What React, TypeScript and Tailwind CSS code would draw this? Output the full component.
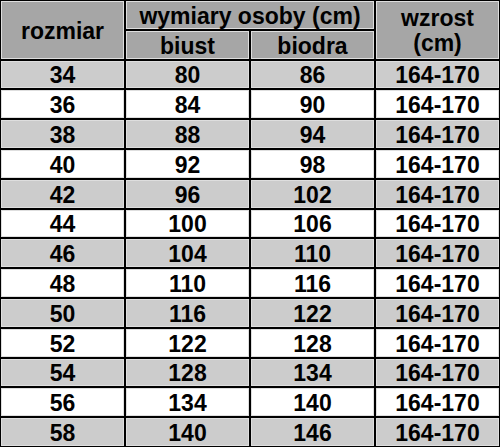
const rows: [number, number, number][] = [
  [34, 80, 86],
  [36, 84, 90],
  [38, 88, 94],
  [40, 92, 98],
  [42, 96, 102],
  [44, 100, 106],
  [46, 104, 110],
  [48, 110, 116],
  [50, 116, 122],
  [52, 122, 128],
  [54, 128, 134],
  [56, 134, 140],
  [58, 140, 146],
];

function Cell({
  children,
  className = "",
}: {
  children: React.ReactNode;
  className?: string;
}) {
  return (
    <div
      className={`flex items-center justify-center border border-[#dedede] text-center leading-[24px] ${className}`}
    >
      <span className="inline-block scale-y-[1.07]">{children}</span>
    </div>
  );
}

export default function App() {
  return (
    <div className="h-[447px] w-[500px] bg-white">
      <div
        className="grid h-[447px] w-[500px] grid-cols-4 grid-rows-[repeat(15,1fr)] gap-[2px] bg-black p-[1px] text-[23px] font-bold text-black"
        style={{ fontFamily: '"Liberation Sans", Arial, sans-serif' }}
      >
        <Cell className="row-span-2 bg-[#a6a6a6]">rozmiar</Cell>
        <Cell className="col-span-2 bg-[#a6a6a6]">wymiary osoby (cm)</Cell>
        <Cell className="row-span-2 bg-[#a6a6a6]">
          wzrost
          <br />
          (cm)
        </Cell>
        <Cell className="bg-[#a6a6a6]">biust</Cell>
        <Cell className="bg-[#a6a6a6]">biodra</Cell>

        {rows.map(([size, bust, hips], i) => {
          const bg = i % 2 === 0 ? "bg-[#cccccc]" : "bg-white";
          return [
            <Cell key={`s${size}`} className={bg}>{size}</Cell>,
            <Cell key={`b${size}`} className={bg}>{bust}</Cell>,
            <Cell key={`h${size}`} className={bg}>{hips}</Cell>,
            <Cell key={`w${size}`} className={bg}>164-170</Cell>,
          ];
        })}
      </div>
    </div>
  );
}
